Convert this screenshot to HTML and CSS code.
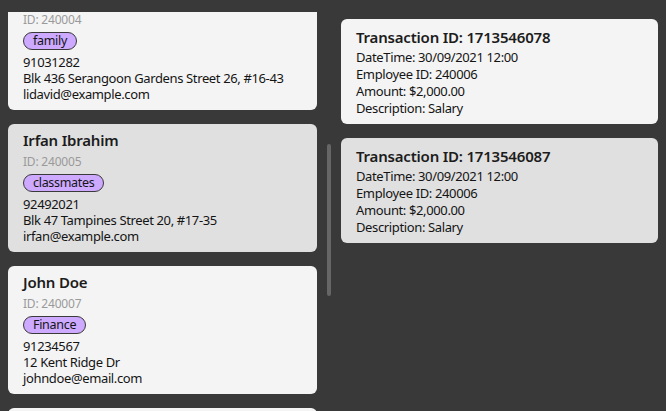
FILE: index.html
```html
<!DOCTYPE html>
<html lang="en">
<head>
<meta charset="utf-8">
<title>Employees and Transactions</title>
<link rel="stylesheet" href="styles.css">
</head>
<body>
<main class="app">
  <section class="persons">
    <div class="viewport">
      <div class="list">
        <article class="card person">
          <h2 class="name">David Li</h2>
          <div class="pid">ID: 240004</div>
          <div class="tags"><span class="tag">family</span></div>
          <div class="line">91031282</div>
          <div class="line">Blk 436 Serangoon Gardens Street 26, #16-43</div>
          <div class="line">lidavid@example.com</div>
        </article>
        <article class="card person selected">
          <h2 class="name">Irfan Ibrahim</h2>
          <div class="pid">ID: 240005</div>
          <div class="tags"><span class="tag">classmates</span></div>
          <div class="line">92492021</div>
          <div class="line">Blk 47 Tampines Street 20, #17-35</div>
          <div class="line">irfan@example.com</div>
        </article>
        <article class="card person">
          <h2 class="name">John Doe</h2>
          <div class="pid">ID: 240007</div>
          <div class="tags"><span class="tag">Finance</span></div>
          <div class="line">91234567</div>
          <div class="line">12 Kent Ridge Dr</div>
          <div class="line">johndoe@email.com</div>
        </article>
        <article class="card person"></article>
      </div>
    </div>
    <div class="scrollbar"><div class="thumb"></div></div>
  </section>
  <section class="transactions">
    <article class="card txn">
      <h2 class="title">Transaction ID: 1713546078</h2>
      <div class="tline">DateTime: 30/09/2021 12:00</div>
      <div class="tline">Employee ID: 240006</div>
      <div class="tline">Amount: $2,000.00</div>
      <div class="tline">Description: Salary</div>
    </article>
    <article class="card txn selected">
      <h2 class="title">Transaction ID: 1713546087</h2>
      <div class="tline">DateTime: 30/09/2021 12:00</div>
      <div class="tline">Employee ID: 240006</div>
      <div class="tline">Amount: $2,000.00</div>
      <div class="tline">Description: Salary</div>
    </article>
  </section>
</main>
</body>
</html>
```
FILE: styles.css
```css
* { box-sizing: border-box; }
html, body { margin: 0; padding: 0; }
body {
  width: 666px;
  height: 411px;
  overflow: hidden;
  background: #393939;
  font-family: "Noto Sans", "Open Sans", sans-serif;
  color: #141414;
}
.app {
  display: flex;
  height: 411px;
}
.persons {
  display: flex;
  width: 335px;
  padding-top: 12px;
}
.viewport {
  width: 317px;
  height: 399px;
  padding-left: 8px;
  overflow: hidden;
}
.list {
  display: flex;
  flex-direction: column;
  gap: 14px;
  margin-top: -30px;
}
.card {
  background: #f4f4f4;
  border-radius: 6px;
}
.card.selected { background: #e0e0e0; }
.person {
  height: 128px;
  padding: 6px 15px 8px;
}
.name, .title {
  margin: 0;
  font-size: 15px;
  line-height: 20px;
  font-weight: 600;
  letter-spacing: -0.2px;
  color: #1c1c1c;
}
.pid {
  margin-top: 4px;
  font-size: 12px;
  line-height: 16px;
  letter-spacing: -0.2px;
  color: #9a9a9a;
}
.tags {
  display: flex;
  margin-top: 4px;
  height: 18px;
}
.tag {
  display: inline-flex;
  align-items: center;
  height: 18px;
  padding: 0 9px;
  background: #cda9ff;
  border: 1px solid #3a3a3a;
  border-radius: 9px;
  font-size: 12.5px;
  line-height: 16px;
  letter-spacing: -0.3px;
  color: #151515;
}
.line {
  font-size: 13px;
  line-height: 16px;
  letter-spacing: -0.37px;
}
.tags + .line { margin-top: 4px; }
.scrollbar {
  width: 4px;
  margin-left: 10px;
}
.thumb {
  margin-top: 132px;
  height: 152px;
  background: #666666;
  border-radius: 2px;
}
.transactions {
  display: flex;
  flex-direction: column;
  gap: 14px;
  padding: 19px 0 0 6px;
}
.txn {
  width: 317px;
  height: 105px;
  padding: 8px 15px 7px;
}
.title { margin-bottom: 2px; }
.tline {
  font-size: 13px;
  line-height: 17px;
  letter-spacing: -0.37px;
}
```
